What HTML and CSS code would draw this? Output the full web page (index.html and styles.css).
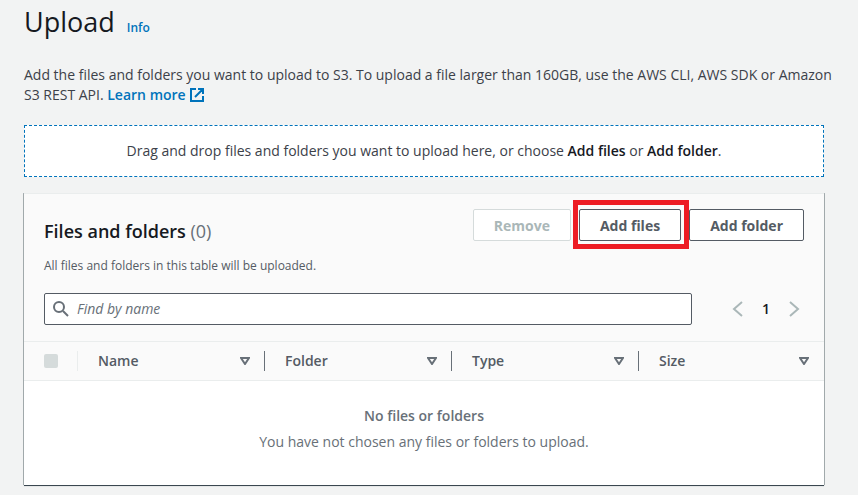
FILE: index.html
```html
<!DOCTYPE html>
<html lang="en">
<head>
<meta charset="utf-8">
<meta name="viewport" content="width=device-width, initial-scale=1">
<title>Upload</title>
<link rel="stylesheet" href="styles.css">
</head>
<body>
<main class="page">
  <header class="page-header">
    <h1>Upload</h1>
    <a class="info" href="#">Info</a>
  </header>
  <p class="intro">Add the files and folders you want to upload to S3. To upload a file larger than 160GB, use the AWS CLI, AWS SDK or Amazon S3 REST API. <a class="more" href="#">Learn more <svg class="external" viewBox="0 0 16 16" aria-hidden="true"><path d="M7 2H2v12h12V9M9 2h5v5M14 2 6 10"/></svg></a></p>

  <section class="dropzone">Drag and drop files and folders you want to upload here, or choose <b>Add files</b> or <b>Add folder</b>.</section>

  <section class="panel">
    <div class="panel-header">
      <div class="title-row">
        <h2>Files and folders <span class="count">(0)</span></h2>
        <div class="actions">
          <button class="btn" type="button" disabled>Remove</button>
          <span class="highlight"><button class="btn" type="button">Add files</button></span>
          <button class="btn" type="button">Add folder</button>
        </div>
      </div>
      <p class="description">All files and folders in this table will be uploaded.</p>
      <div class="filter-row">
        <div class="search">
          <svg class="search-icon" viewBox="0 0 16 16" aria-hidden="true"><circle cx="6" cy="6" r="5"/><path d="m10 10 5 5"/></svg>
          <input type="text" placeholder="Find by name" aria-label="Find by name">
        </div>
        <nav class="pager" aria-label="Pages">
          <button type="button" aria-label="Previous page"><svg viewBox="0 0 16 16" aria-hidden="true"><path d="m12 1-8 7 8 7"/></svg></button>
          <span class="page-number">1</span>
          <button type="button" aria-label="Next page"><svg viewBox="0 0 16 16" aria-hidden="true"><path d="m4 1 8 7-8 7"/></svg></button>
        </nav>
      </div>
    </div>
    <table>
      <thead>
        <tr>
          <th class="select-col"><div class="cell"><input type="checkbox" aria-label="Select all" disabled></div></th>
          <th><div class="cell">Name<svg class="sort" viewBox="0 0 10 8" aria-hidden="true"><path d="M1 1h8L5 7z"/></svg></div></th>
          <th><div class="cell">Folder<svg class="sort" viewBox="0 0 10 8" aria-hidden="true"><path d="M1 1h8L5 7z"/></svg></div></th>
          <th><div class="cell">Type<svg class="sort" viewBox="0 0 10 8" aria-hidden="true"><path d="M1 1h8L5 7z"/></svg></div></th>
          <th class="size-col"><div class="cell">Size<svg class="sort" viewBox="0 0 10 8" aria-hidden="true"><path d="M1 1h8L5 7z"/></svg></div></th>
        </tr>
      </thead>
      <tbody>
        <tr>
          <td class="empty" colspan="5"><b>No files or folders</b><p>You have not chosen any files or folders to upload.</p></td>
        </tr>
      </tbody>
    </table>
  </section>
</main>
</body>
</html>
```
FILE: styles.css
```css
* {
  box-sizing: border-box;
}

body {
  margin: 0;
  background: #f2f3f3;
  color: #3c4149;
  font: 14px/20px "Open Sans", "Noto Sans", sans-serif;
}

h1, h2, p {
  margin: 0;
}

b, th, .more, .info {
  font-weight: 600;
}

a {
  color: #0073bb;
  text-decoration: none;
}

.page {
  padding: 4px 24px 8px;
}

.page-header {
  display: flex;
  align-items: baseline;
  gap: 12px;
}

h1 {
  color: #16191f;
  font-size: 27px;
  font-weight: 400;
  line-height: 36px;
}

.info {
  font-size: 12px;
}

.intro {
  padding: 25px 0 20px;
}

.more {
  white-space: nowrap;
}

.external {
  width: 16px;
  height: 16px;
  vertical-align: -3px;
  fill: none;
  stroke: currentColor;
  stroke-width: 2;
}

.dropzone,
.panel {
  margin-right: 10px;
}

.dropzone {
  padding: 15px;
  border: 1px dashed #0073bb;
  background: #fff;
  text-align: center;
}

.dropzone b {
  color: #16191f;
}

.panel {
  margin-top: 16px;
  border-top: 1px solid #eaeded;
  background: #fff;
  box-shadow: 0 1px 1px 0 rgba(0, 28, 36, 0.3), 1px 0 0 #aab1b4, -1px 0 0 #aab1b4, 0 1px 0 #545b64;
}

.panel-header {
  padding: 15px 20px 16px;
  background: #fafafa;
}

.title-row {
  display: flex;
  justify-content: space-between;
}

h2 {
  padding-top: 10px;
  color: #16191f;
  font-size: 18px;
  font-weight: 600;
  line-height: 24px;
}

.count {
  color: #687078;
  font-weight: 400;
}

.actions {
  display: flex;
  gap: 8px;
  align-items: flex-start;
}

.btn {
  height: 32px;
  padding: 0 20px;
  border: 1px solid #545b64;
  border-radius: 2px;
  background: #fff;
  color: #545b64;
  font-family: inherit;
  font-size: 14px;
  font-weight: 700;
}

.btn:disabled {
  border-color: #d5dbdb;
  color: #aab7b8;
}

.highlight {
  position: relative;
  z-index: 1;
}

.highlight::after {
  position: absolute;
  inset: -9px -8px -8px -6px;
  border: 5px solid #ed1c24;
  content: "";
  pointer-events: none;
}

.description {
  padding-top: 14px;
  color: #545b64;
  font-size: 12px;
  line-height: 18px;
}

.filter-row {
  display: flex;
  gap: 38px;
  padding-top: 18px;
}

.search {
  display: flex;
  flex: 1;
  align-items: center;
  gap: 8px;
  height: 32px;
  padding: 0 8px;
  border: 1px solid #545b64;
  border-radius: 2px;
  background: #fff;
}

.search-icon {
  width: 16px;
  height: 16px;
  fill: none;
  stroke: #687078;
  stroke-width: 2;
}

.search input {
  flex: 1;
  min-width: 0;
  padding: 0;
  border: 0;
  outline: 0;
  background: none;
  font: inherit;
}

.search input::placeholder {
  color: #687078;
  font-style: italic;
}

.pager {
  display: flex;
  align-items: center;
  gap: 12px;
  margin-right: 2px;
}

.pager button {
  display: flex;
  padding: 0;
  border: 0;
  background: none;
}

.pager svg {
  width: 16px;
  height: 16px;
  fill: none;
  stroke: #aab7b8;
  stroke-width: 2;
}

.page-number {
  width: 16px;
  color: #16191f;
  font-weight: 600;
  text-align: center;
}

table {
  width: 100%;
  border-collapse: separate;
  border-spacing: 0;
  table-layout: fixed;
}

th {
  padding: 9px 0;
  border: solid #eaeded;
  border-width: 1px 0;
  background: #fafafa;
  color: #545b64;
  text-align: left;
}

.cell {
  display: flex;
  align-items: center;
  justify-content: space-between;
  height: 20px;
  padding: 0 14px 0 20px;
  border-right: 1px solid #687078;
}

.select-col {
  width: 54px;
}

.size-col {
  width: 185px;
}

.select-col .cell {
  border-color: #eaeded;
}

.size-col .cell {
  padding-right: 15px;
  border: 0;
}

.select-col input {
  flex: none;
  width: 14px;
  height: 14px;
  margin: 0;
  border-radius: 2px;
  background: #d5dbdb;
  appearance: none;
}

.sort {
  width: 10px;
  height: 8px;
  fill: none;
  stroke: #687078;
  stroke-width: 2;
}

.empty {
  padding: 25px 20px 33px;
  color: #687078;
  text-align: center;
}

.empty p {
  padding-top: 6px;
}
```
